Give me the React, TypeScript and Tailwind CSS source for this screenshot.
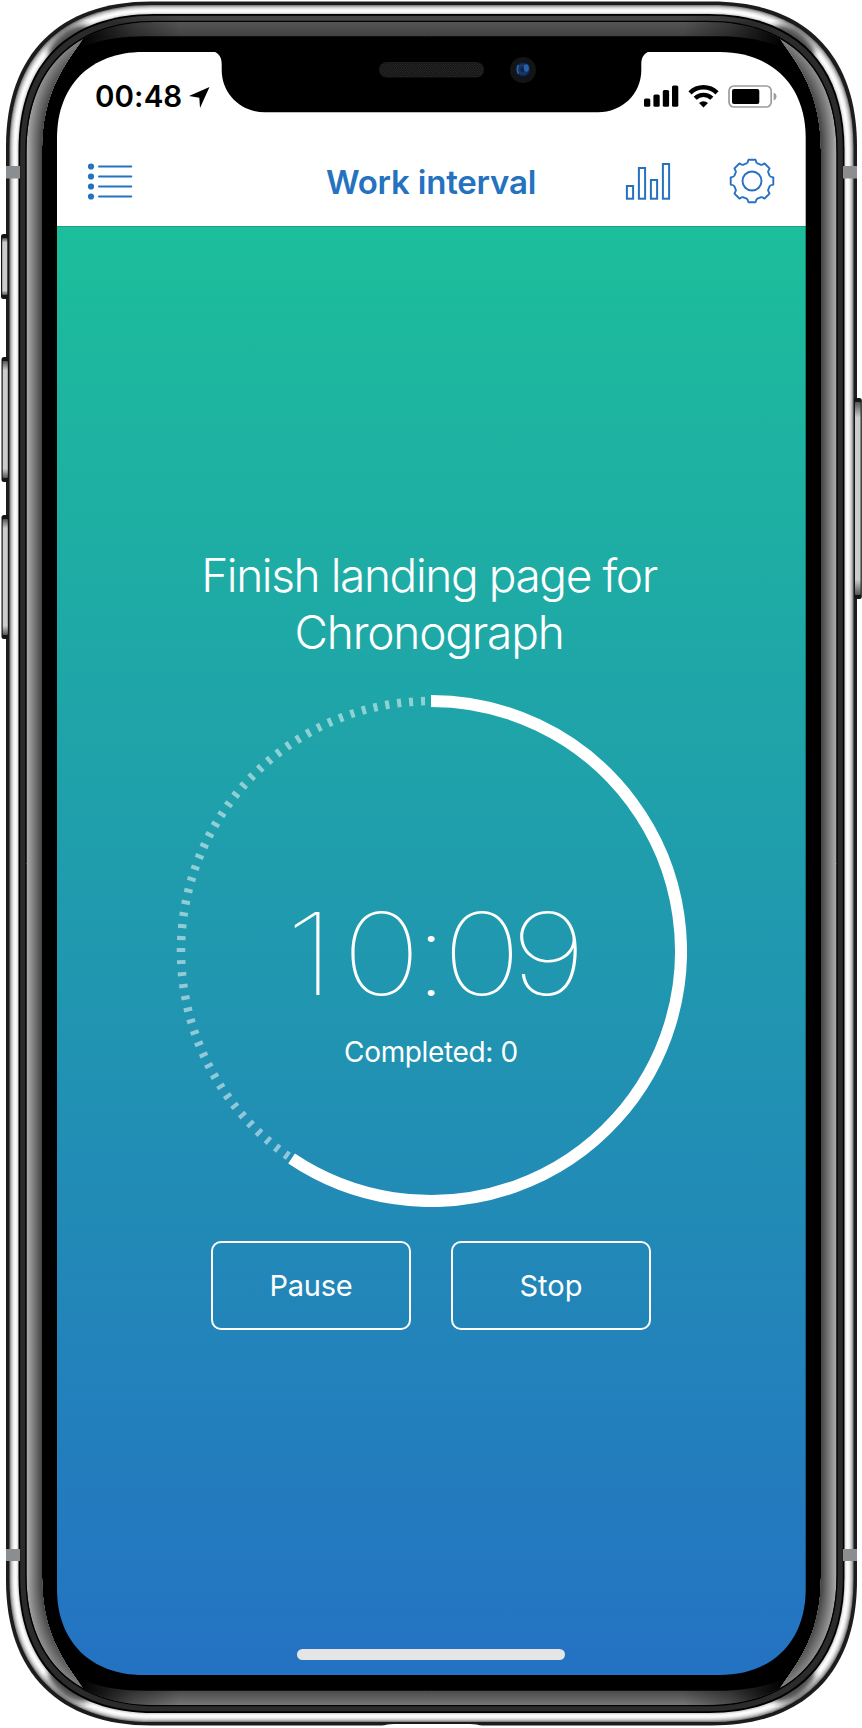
import React from "react";

const CX = 431.5;
const CY = 863.5;

/** Rounded rectangle with smooth, continuous corners. */
function shell(x0: number, y0: number, x1: number, y1: number, r: number, k: number) {
  const c = r * k;
  return [
    `M${x0} ${y0 + r}C${x0} ${y0 + c} ${x0 + c} ${y0} ${x0 + r} ${y0}`,
    `H${x1 - r}C${x1 - c} ${y0} ${x1} ${y0 + c} ${x1} ${y0 + r}`,
    `V${y1 - r}C${x1} ${y1 - c} ${x1 - c} ${y1} ${x1 - r} ${y1}`,
    `H${x0 + r}C${x0 + c} ${y1} ${x0} ${y1 - c} ${x0} ${y1 - r}Z`,
  ].join("");
}

function inset(d: number) {
  return shell(6 + d, 1.5 + d, 857 - d, 1725.5 - d, 145 - d * 0.75, 0.365);
}

function grey(v: number) {
  const n = Math.round(v);
  return `rgb(${n},${n},${n})`;
}

const steel: [number, number][] = [
  [3.5, 135], [4.5, 175], [5.5, 205], [6.5, 228], [7.5, 243], [8.5, 252], [9.5, 250], [10.5, 238], [11.5, 215],
];
const gloss = Array.from({ length: 16 }, (_, i) => [20.5 + i, 172 - i * 7] as const);
const corners = [
  "",
  `translate(${CX * 2} 0) scale(-1 1)`,
  `translate(0 ${CY * 2}) scale(1 -1)`,
  `translate(${CX * 2} ${CY * 2}) scale(-1 -1)`,
];
const SCREEN = shell(57, 52, 805.7, 1675, 86, 0.39);

function SideKey({ x, y, w, h }: { x: number; y: number; w: number; h: number }) {
  return (
    <g>
      <rect x={x} y={y} width={w} height={h} rx="2.5" fill="#151515" />
      <rect x={x + 1.2} y={y + 4} width={w - 2.4} height={h - 8} rx="1" fill="url(#key)" />
    </g>
  );
}

function DeviceFrame() {
  return (
    <svg className="pointer-events-none absolute inset-0 z-10" width="862" height="1728" viewBox="0 0 862 1728" aria-hidden="true">
      <defs>
        <linearGradient id="key" x1="0" y1="0" x2="0" y2="1">
          <stop offset="0" stopColor="#555" />
          <stop offset=".08" stopColor="#ccc" />
          <stop offset=".92" stopColor="#ccc" />
          <stop offset="1" stopColor="#555" />
        </linearGradient>
        <linearGradient id="rim" x1="0" y1="0" x2="1" y2="0">
          <stop offset="0" stopColor="#464646" stopOpacity="0" />
          <stop offset=".12" stopColor="#464646" />
          <stop offset=".88" stopColor="#464646" />
          <stop offset="1" stopColor="#464646" stopOpacity="0" />
        </linearGradient>
        <linearGradient id="topFade" gradientUnits="userSpaceOnUse" x1="84" y1="0" x2="180" y2="0">
          <stop offset="0" stopColor="#000" stopOpacity=".95" />
          <stop offset=".5" stopColor="#000" stopOpacity=".35" />
          <stop offset="1" stopColor="#000" stopOpacity="0" />
        </linearGradient>
        <linearGradient id="tipShade" gradientUnits="userSpaceOnUse" x1="0" y1="30" x2="0" y2="150">
          <stop offset="0" stopColor="#000" stopOpacity=".3" />
          <stop offset="1" stopColor="#000" stopOpacity="0" />
        </linearGradient>
        <linearGradient id="bandTop" gradientUnits="userSpaceOnUse" x1="0" y1="22" x2="0" y2="37">
          <stop offset="0" stopColor="#555" />
          <stop offset="1" stopColor="#404040" />
        </linearGradient>
        <linearGradient id="bandBottom" gradientUnits="userSpaceOnUse" x1="0" y1="22" x2="0" y2="37">
          <stop offset="0" stopColor="#757575" />
          <stop offset="1" stopColor="#484848" />
        </linearGradient>
        <mask id="opening" maskUnits="userSpaceOnUse" x="0" y="0" width="862" height="1728">
          <rect width="862" height="1728" fill="#fff" />
          <path d={SCREEN} fill="#000" />
        </mask>
        <clipPath id="flank">
          <path d="M0 864V0L86 28V35C66 62 42 92 42 150V864Z" />
        </clipPath>
        <clipPath id="glossArea">
          <path d={inset(20.5)} />
        </clipPath>
        <clipPath id="rimArea">
          <path d={inset(14.2)} />
        </clipPath>
        <clipPath id="steelArea">
          <path d={inset(2)} />
        </clipPath>
        <filter id="soft">
          <feGaussianBlur stdDeviation="3" />
        </filter>
        <pattern id="mesh" width="2.4" height="2.4" patternUnits="userSpaceOnUse">
          <rect width="2.4" height="2.4" fill="#101010" />
          <circle cx=".7" cy=".7" r=".6" fill="#333" />
          <circle cx="1.9" cy="1.9" r=".6" fill="#333" />
        </pattern>
        <radialGradient id="lens" cx=".5" cy=".5" r=".5">
          <stop offset="0" stopColor="#0a1838" />
          <stop offset=".6" stopColor="#173c70" />
          <stop offset="1" stopColor="#0b1c3c" />
        </radialGradient>
      </defs>

      <g mask="url(#opening)">
        <path d={inset(0)} fill="#1c1c1c" />
        <SideKey x={1} y={234} w={7.5} h={65} />
        <SideKey x={1.5} y={357} w={7.5} h={125} />
        <SideKey x={1.5} y={515} w={7.5} h={124} />
        <SideKey x={853.8} y={398} w={8} h={201} />

        {steel.map(([d, v]) => (
          <path key={d} d={inset(d)} fill={grey(v)} />
        ))}
        <g clipPath="url(#steelArea)">
          {corners.map((t) => (
            <path key={t} transform={t} d="M48 50C58 32 72 22 90 26L84 34C72 38 62 48 52 60Z" fill="#222" fillOpacity=".8" filter="url(#soft)" />
          ))}
        </g>
        <path d={inset(12.5)} fill="#000" />
        <path d={inset(14.2)} fill="#2b2b2b" />
        <rect x="100" y="15.7" width="663" height="6" fill="url(#rim)" clipPath="url(#rimArea)" />
        <path d={inset(19.3)} fill="#000" />

        <g clipPath="url(#glossArea)">
          {corners.map((t, i) => (
            <g key={t} transform={t}>
              <path d="M84 20H432V36.3H145C122 36.3 105 39 84 46Z" fill={i < 2 ? "url(#bandTop)" : "url(#bandBottom)"} />
              <path d="M83 19H182V48H83Z" fill="url(#topFade)" />
              <g clipPath="url(#flank)">
                {gloss.map(([d, v]) => (
                  <path key={d} d={inset(d)} fill={grey(v)} />
                ))}
                <rect x="20" y="20" width="70" height="130" fill="url(#tipShade)" />
              </g>
            </g>
          ))}
        </g>

        <g fill="#8b8e90">
          <rect x="6" y="166" width="14" height="12.5" />
          <rect x="843" y="166" width="14" height="12.5" />
          <rect x="6" y="1549" width="14" height="12" />
          <rect x="843" y="1549" width="14" height="12" />
        </g>
        <path d="M382 1726Q387 1724 394 1724H470Q477 1724 482 1726Z" fill="#fff" />
      </g>

      <path d="M211 51C218 52 221.7 56 221.7 64V70C221.7 94 241 112.3 265 112.3H598C622 112.3 641.3 94 641.3 70V64C641.3 56 645 52 652 51Z" fill="#000" />
      <rect x="379" y="62" width="105" height="15.5" rx="7.75" fill="url(#mesh)" />
      <circle cx="523" cy="70" r="13" fill="#131416" />
      <circle cx="523" cy="69.5" r="7.2" fill="url(#lens)" />
      <ellipse cx="526.3" cy="68" rx="2.6" ry="3.8" fill="#2663a6" />
      <path d="M518.5 65Q516 69 518.5 74" fill="none" stroke="#2e67a5" strokeWidth="1.5" />
    </svg>
  );
}

function StatusBar() {
  return (
    <div className="flex h-[74px] items-start justify-between pt-[27px] pr-[29px] pl-[38px] text-black">
      <div className="flex items-center gap-[7px]">
        <span className="w-[87px] text-[29.5px] leading-[34px] font-semibold tracking-[0.1px] whitespace-nowrap">00:48</span>
        <svg width="21" height="21" viewBox="0 0 21 21" className="mt-[3px]">
          <path d="M20.5 0L0 9L10.3 10.7L11 21Z" fill="currentColor" />
        </svg>
      </div>
      <div className="flex items-start gap-[9px] pt-[6px]">
        <svg width="35" height="22" viewBox="0 0 35 22">
          <g fill="currentColor">
            <rect x="0" y="13.5" width="6.3" height="8.3" rx="1.6" />
            <rect x="9.4" y="9.5" width="6.3" height="12.3" rx="1.6" />
            <rect x="18.8" y="5" width="6.3" height="16.8" rx="1.6" />
            <rect x="28" y="0.5" width="6.3" height="21.3" rx="1.6" />
          </g>
        </svg>
        <svg width="31" height="23" viewBox="0 0 31 23">
          <g fill="none" stroke="currentColor" strokeWidth="4.4">
            <path d="M2 7.9A19 19 0 0 1 29 7.9" />
            <path d="M7.2 13.3A11.7 11.7 0 0 1 23.8 13.3" />
          </g>
          <path d="M11 17.9A6.6 6.6 0 0 1 20 17.9L15.5 22.6Z" fill="currentColor" />
        </svg>
        <svg width="49" height="23" viewBox="0 0 49 23">
          <rect x="1" y="1" width="42.2" height="21" rx="5" fill="none" stroke="#9c9c9c" strokeWidth="1.7" />
          <rect x="4" y="4" width="27.3" height="15" rx="2" fill="currentColor" />
          <path d="M45.6 7.8C49.5 9 49.5 14.2 45.6 15.4Z" fill="#9c9c9c" />
        </svg>
      </div>
    </div>
  );
}

function gearPath() {
  const pt = (x: number, y: number, a: number) => {
    const s = Math.sin(a);
    const c = Math.cos(a);
    return `${(23 + x * c - y * s).toFixed(2)} ${(23 + x * s + y * c).toFixed(2)}`;
  };
  let d = "";
  for (let i = 0; i < 8; i++) {
    const a = (i * Math.PI) / 4;
    d += `${i ? "L" : "M"}${pt(-5.4, -17.6, a)}Q${pt(-4.2, -18.2, a)} ${pt(-3.9, -20.2, a)}`;
    d += `L${pt(-3.5, -21.3, a)}L${pt(3.5, -21.3, a)}L${pt(3.9, -20.2, a)}Q${pt(4.2, -18.2, a)} ${pt(5.4, -17.6, a)}`;
  }
  return d + "Z";
}

function NavBar() {
  return (
    <header className="grid h-[101px] grid-cols-[1fr_auto_1fr] items-center border-b border-[#1a9f86] pr-[31px] pl-[30px] text-[#2472c0]">
      <button aria-label="Tasks" className="mt-[10px] justify-self-start">
        <svg width="46" height="38" viewBox="0 0 46 38">
          {[4.5, 14.5, 24.5, 34.5].map((y) => (
            <g key={y}>
              <circle cx="4" cy={y} r="3.1" fill="currentColor" />
              <path d={`M12 ${y}H44.3`} stroke="currentColor" strokeWidth="2" strokeLinecap="round" />
            </g>
          ))}
        </svg>
      </button>
      <h1 className="mt-[12px] text-[33px] leading-10 font-semibold tracking-[-0.2px] whitespace-nowrap">Work interval</h1>
      <div className="mt-[10px] flex items-center gap-[58px] justify-self-end">
        <button aria-label="Statistics">
          <svg width="46" height="46" viewBox="0 0 46 46" fill="none" stroke="currentColor" strokeWidth="2">
            <rect x="1.9" y="28" width="6.2" height="12.7" />
            <rect x="13.9" y="10" width="6.2" height="30.7" />
            <rect x="25.9" y="22" width="6.2" height="18.7" />
            <rect x="37.9" y="6" width="6.2" height="34.7" />
          </svg>
        </button>
        <button aria-label="Settings">
          <svg width="46" height="46" viewBox="0 0 46 46" fill="none" stroke="currentColor" strokeWidth="1.9" strokeLinejoin="round">
            <path d={gearPath()} />
            <circle cx="23" cy="23" r="9.5" />
          </svg>
        </button>
      </div>
    </header>
  );
}

function Timer() {
  const end = (213.9 * Math.PI) / 180;
  const ex = 256 + 250 * Math.sin(end);
  const ey = 256 - 250 * Math.cos(end);
  return (
    <div className="grid size-[512px]">
      <svg className="col-start-1 row-start-1" width="512" height="512" viewBox="0 0 512 512" fill="none" stroke="#fff">
        <path d={`M256 6A250 250 0 0 0 ${ex} ${ey}`} strokeWidth="8.5" strokeOpacity=".5" strokeDasharray="4 7.99" strokeDashoffset="-6" />
        <path d={`M256 6A250 250 0 1 1 ${ex} ${ey}`} strokeWidth="12" />
      </svg>
      <div className="col-start-1 row-start-1 flex flex-col items-center pt-[191px]">
        <div className="ml-[7px] scale-x-[1.18] text-[114px] leading-[136px] font-thin whitespace-nowrap">
          <span className="tracking-[6px]">1</span>
          <span className="tracking-[-7px]">0</span>
          <span className="tracking-[-6px]">:</span>
          <span className="tracking-[-9.5px]">0</span>
          <span className="tracking-[-3px]">9</span>
        </div>
        <div className="mt-[13px] text-[28px] leading-[34px] tracking-[-0.35px] whitespace-nowrap">Completed: 0</div>
      </div>
    </div>
  );
}

export default function App() {
  return (
    <div className="relative h-[1728px] w-[862px] overflow-hidden bg-white pt-[52px] pl-[57px] font-['Inter','Liberation_Sans',sans-serif]">
      <DeviceFrame />
      <div className="flex h-[1623px] w-[749px] flex-col overflow-hidden rounded-[66px] bg-white">
        <StatusBar />
        <NavBar />
        <main className="flex flex-1 flex-col items-center bg-linear-to-b/srgb from-[#1cbe9b] to-[#2472c3] pt-[320px] pr-[1px] text-white">
          <h2 className="mr-[4px] text-center text-[46px] leading-[57px] font-light tracking-[-1.4px] whitespace-nowrap">
            Finish landing page for
            <br />
            <span className="tracking-[-1.2px]">Chronograph</span>
          </h2>
          <div className="mt-[34px]">
            <Timer />
          </div>
          <div className="mt-[34px] flex gap-[40px]">
            <button className="h-[89px] w-[200px] rounded-[10px] border-2 border-white text-[29px] tracking-[-0.2px]">Pause</button>
            <button className="h-[89px] w-[200px] rounded-[10px] border-2 border-white text-[29px]">Stop</button>
          </div>
          <div className="mt-auto mb-[15px] h-[11px] w-[268px] rounded-full bg-[#e5e5e5]" />
        </main>
      </div>
    </div>
  );
}
